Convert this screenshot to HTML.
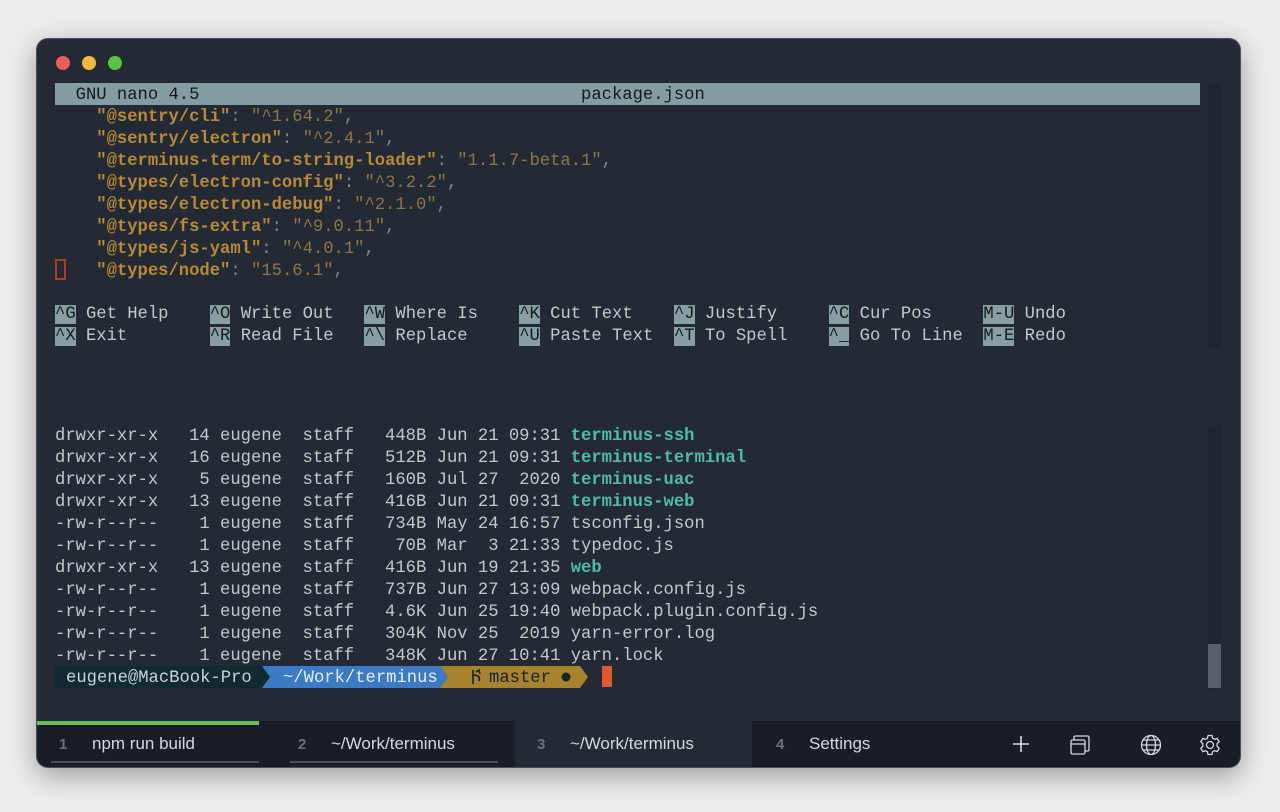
<!DOCTYPE html>
<html><head><meta charset="utf-8"><style>
*{margin:0;padding:0;box-sizing:border-box}
body{width:1280px;height:812px;background:#ededed;position:relative;overflow:hidden;font-family:"Liberation Mono",monospace}
.win{position:absolute;left:36px;top:38px;width:1205px;height:730px;background:#232a34;border-radius:12px;border:1px solid #4a4f57;box-shadow:0 8px 28px rgba(0,0,0,.35);overflow:hidden}
.dot{position:absolute;top:17px;width:14px;height:14px;border-radius:50%}
.r{position:absolute;left:55px;height:22px;line-height:22px;padding-top:2px;font-size:17.2px;white-space:pre;color:#c3c8ce}
.k{color:#b78a36;font-weight:bold}.v{color:#8e7748}.p{color:#7f8790}
.g{color:#4fbca3;font-weight:bold}
.sk{background:#879fa3;color:#15191f}
.tab{position:absolute;top:720px;height:48px;font-family:"Liberation Sans",sans-serif;font-size:17px;color:#d5d9de;line-height:48px}
.tab b{color:#6b727c;font-weight:bold;font-size:15px;display:inline-block;width:33px;text-align:left}
</style></head><body>
<div class="win">
<div class="dot" style="left:19px;background:#ee5e57"></div>
<div class="dot" style="left:45px;background:#f4b83d"></div>
<div class="dot" style="left:71px;background:#58c444"></div>
<div style="position:absolute;left:1171px;top:44px;width:13px;height:264px;background:#1f252e"></div>
<div style="position:absolute;left:1171px;top:386px;width:13px;height:264px;background:#1f252e"></div>
<div style="position:absolute;left:1171px;top:605px;width:13px;height:44px;background:#585e68"></div>
<div style="position:absolute;left:0;top:682px;width:1205px;height:48px;background:#181d26;border-top:1px solid #12161c"></div>
<div style="position:absolute;left:478px;top:682px;width:237px;height:48px;background:#232a34"></div>
<div style="position:absolute;left:0;top:682px;width:222px;height:4px;background:#6dbb5b"></div>
<div style="position:absolute;left:14px;top:722px;width:208px;height:2px;background:#4a505a"></div>
<div style="position:absolute;left:253px;top:722px;width:208px;height:2px;background:#4a505a"></div>
</div>
<div class="r" style="top:83px;width:1145px;background:#849da1;color:#15191f">  GNU nano 4.5                                     package.json</div>
<div class="r" style="top:105px">    <span class="k">"@sentry/cli"</span><span class="p">: </span><span class="v">"^1.64.2"</span><span class="p">,</span></div>
<div class="r" style="top:127px">    <span class="k">"@sentry/electron"</span><span class="p">: </span><span class="v">"^2.4.1"</span><span class="p">,</span></div>
<div class="r" style="top:149px">    <span class="k">"@terminus-term/to-string-loader"</span><span class="p">: </span><span class="v">"1.1.7-beta.1"</span><span class="p">,</span></div>
<div class="r" style="top:171px">    <span class="k">"@types/electron-config"</span><span class="p">: </span><span class="v">"^3.2.2"</span><span class="p">,</span></div>
<div class="r" style="top:193px">    <span class="k">"@types/electron-debug"</span><span class="p">: </span><span class="v">"^2.1.0"</span><span class="p">,</span></div>
<div class="r" style="top:215px">    <span class="k">"@types/fs-extra"</span><span class="p">: </span><span class="v">"^9.0.11"</span><span class="p">,</span></div>
<div class="r" style="top:237px">    <span class="k">"@types/js-yaml"</span><span class="p">: </span><span class="v">"^4.0.1"</span><span class="p">,</span></div>
<div class="r" style="top:259px">    <span class="k">"@types/node"</span><span class="p">: </span><span class="v">"15.6.1"</span><span class="p">,</span></div>
<div style="position:absolute;left:55px;top:259px;width:11px;height:21px;border:2px solid #a8402c"></div>
<div class="r" style="top:302px"><span class="sk">^G</span> Get Help    <span class="sk">^O</span> Write Out   <span class="sk">^W</span> Where Is    <span class="sk">^K</span> Cut Text    <span class="sk">^J</span> Justify     <span class="sk">^C</span> Cur Pos     <span class="sk">M-U</span> Undo</div>
<div class="r" style="top:324px"><span class="sk">^X</span> Exit        <span class="sk">^R</span> Read File   <span class="sk">^\</span> Replace     <span class="sk">^U</span> Paste Text  <span class="sk">^T</span> To Spell    <span class="sk">^_</span> Go To Line  <span class="sk">M-E</span> Redo</div>
<div class="r" style="top:424px">drwxr-xr-x   14 eugene  staff   448B Jun 21 09:31 <span class="g">terminus-ssh</span></div>
<div class="r" style="top:446px">drwxr-xr-x   16 eugene  staff   512B Jun 21 09:31 <span class="g">terminus-terminal</span></div>
<div class="r" style="top:468px">drwxr-xr-x    5 eugene  staff   160B Jul 27  2020 <span class="g">terminus-uac</span></div>
<div class="r" style="top:490px">drwxr-xr-x   13 eugene  staff   416B Jun 21 09:31 <span class="g">terminus-web</span></div>
<div class="r" style="top:512px">-rw-r--r--    1 eugene  staff   734B May 24 16:57 tsconfig.json</div>
<div class="r" style="top:534px">-rw-r--r--    1 eugene  staff    70B Mar  3 21:33 typedoc.js</div>
<div class="r" style="top:556px">drwxr-xr-x   13 eugene  staff   416B Jun 19 21:35 <span class="g">web</span></div>
<div class="r" style="top:578px">-rw-r--r--    1 eugene  staff   737B Jun 27 13:09 webpack.config.js</div>
<div class="r" style="top:600px">-rw-r--r--    1 eugene  staff   4.6K Jun 25 19:40 webpack.plugin.config.js</div>
<div class="r" style="top:622px">-rw-r--r--    1 eugene  staff   304K Nov 25  2019 yarn-error.log</div>
<div class="r" style="top:644px">-rw-r--r--    1 eugene  staff   348K Jun 27 10:41 yarn.lock</div>
<svg style="position:absolute;left:55px;top:666px" width="560" height="22">
<polygon points="0,0 207,0 215,11 207,22 0,22" fill="#0f2a30"/>
<polygon points="207,0 385,0 393,11 385,22 207,22 215,11" fill="#3b7bc6"/>
<polygon points="385,0 525,0 533,11 525,22 385,22 393,11" fill="#a7832d"/>
<circle cx="511" cy="11" r="4.5" fill="#16232b"/>
<path d="M418 4 L418 18 M418 9 Q426 9 424 15 M421 6 L424 4 L425 8" stroke="#16232b" stroke-width="1.6" fill="none"/>
<rect x="547" y="0" width="10" height="21" fill="#e2582c"/>
</svg>
<div class="r" style="top:666px;left:66px;color:#c9d3d6">eugene@MacBook-Pro</div>
<div class="r" style="top:666px;left:283px;color:#e4edf7">~/Work/terminus</div>
<div class="r" style="top:666px;left:489px;color:#1a232b">master</div>
<div class="tab" style="left:59px"><b>1</b>npm run build</div>
<div class="tab" style="left:298px"><b>2</b>~/Work/terminus</div>
<div class="tab" style="left:537px"><b>3</b>~/Work/terminus</div>
<div class="tab" style="left:776px"><b>4</b>Settings</div>
<svg style="position:absolute;left:1010px;top:733px" width="22" height="22"><path d="M11 3V19M3 11H19" stroke="#d5d9de" stroke-width="1.6"/></svg>
<svg style="position:absolute;left:1069px;top:734px" width="22" height="22" fill="none" stroke="#d5d9de" stroke-width="1.3"><rect x="2" y="6" width="14" height="14" rx="1.5"/><path d="M2 10H16M5 6V3.5Q5 2 6.5 2H18.5Q20 2 20 3.5V15.5Q20 17 18.5 17H16"/></svg>
<svg style="position:absolute;left:1140px;top:734px" width="22" height="22" fill="none" stroke="#d5d9de" stroke-width="1.3"><circle cx="11" cy="11" r="9.5"/><ellipse cx="11" cy="11" rx="4.5" ry="9.5"/><path d="M1.5 11H20.5M3 6H19M3 16H19"/></svg>
<svg style="position:absolute;left:1199px;top:734px" width="22" height="22" fill="none" stroke="#d5d9de" stroke-width="1.3"><path d="M9 1.5H13L13.6 4.2L15.6 5.3L18.2 4.4L20.2 7.8L18.1 9.7V12.3L20.2 14.2L18.2 17.6L15.6 16.7L13.6 17.8L13 20.5H9L8.4 17.8L6.4 16.7L3.8 17.6L1.8 14.2L3.9 12.3V9.7L1.8 7.8L3.8 4.4L6.4 5.3L8.4 4.2Z"/><circle cx="11" cy="11" r="3.5"/></svg>
</body></html>
